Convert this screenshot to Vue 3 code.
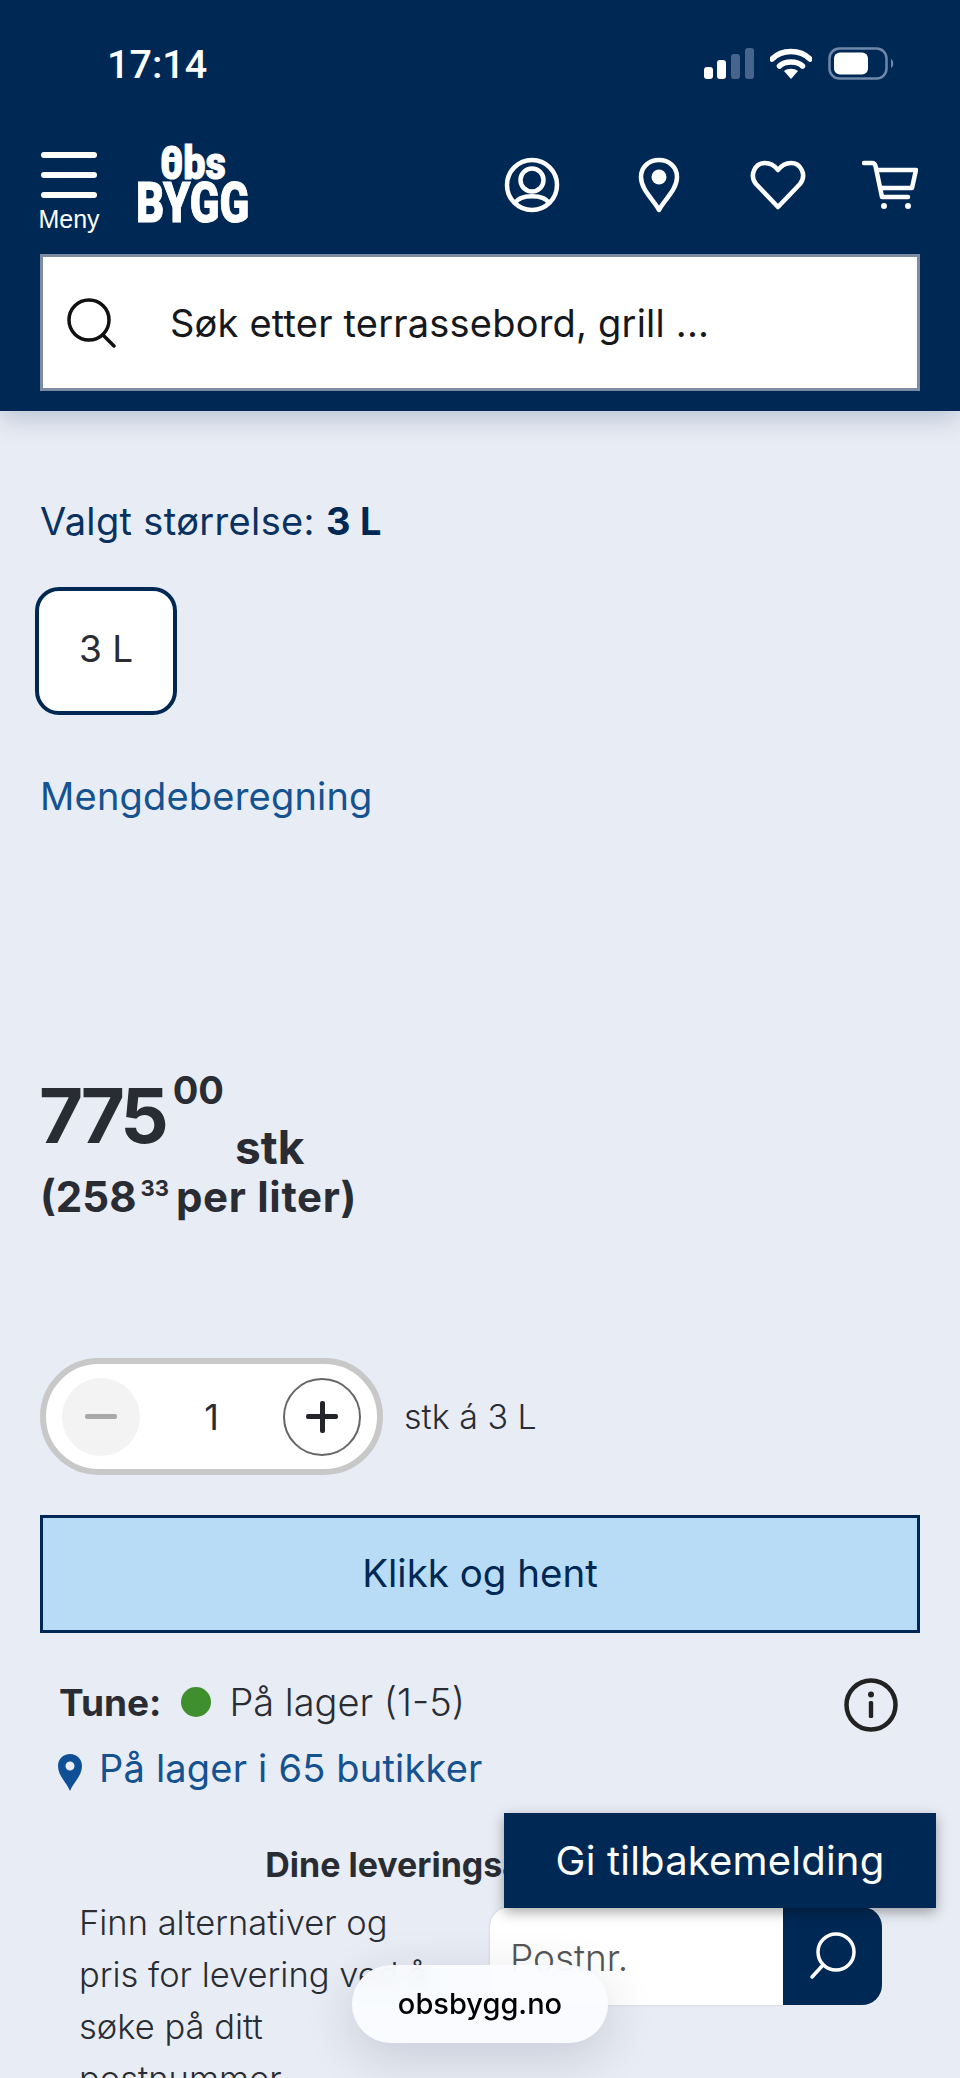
<script setup>
import { ref } from 'vue'

const qty = ref(1)
const lines = ['Finn alternativer og', 'pris for levering ved å', 'søke på ditt', 'postnummer']
</script>

<template>
  <div class="page">
    <header class="top">
      <div class="status">
        <span class="time">17:14</span>
        <div class="status-icons">
          <svg class="signal" width="50" height="31" viewBox="0 0 50 31">
            <rect x="0" y="19" width="9" height="12" rx="3" fill="#fff" />
            <rect x="13" y="12" width="9" height="19" rx="3" fill="#fff" />
            <rect x="27" y="6" width="9" height="25" rx="3" fill="#47658c" />
            <rect x="41" y="0" width="9" height="31" rx="3" fill="#47658c" />
          </svg>
          <svg class="wifi" width="42" height="32" viewBox="0 0 42 32">
            <path d="M2 11 C12 1 30 1 40 11" fill="none" stroke="#fff" stroke-width="5.5" stroke-linecap="round" />
            <path d="M9.5 18 C15 12.500 27 12.500 32.500 18" fill="none" stroke="#fff" stroke-width="5.500" stroke-linecap="round" />
            <path d="M14 23 C18 20 24 20 28 23 L21 31 Z" fill="#fff" />
          </svg>
          <svg class="battery" width="67" height="33" viewBox="0 0 67 33">
            <rect x="1.500" y="1.500" width="57" height="30" rx="10" fill="none" stroke="#6f88a9" stroke-width="2.500" />
            <rect x="6" y="5.500" width="34" height="22" rx="6" fill="#fff" />
            <path d="M63 12 C66 13 66 20 63 21 Z" fill="#6f88a9" />
          </svg>
        </div>
      </div>

      <div class="nav">
        <div class="menu">
          <div class="burger"><i></i><i></i><i></i></div>
          <span class="menu-label">Meny</span>
        </div>
        <div class="logo">
          <span class="logo-obs"><span class="logo-zero">0</span>bs</span>
          <span class="logo-bygg">BYGG</span>
        </div>
        <div class="nav-icons">
          <svg class="ic-user" width="56" height="56" viewBox="0 0 56 56" fill="none" stroke="#fff" stroke-width="4.500">
            <circle cx="28" cy="28" r="25" />
            <circle cx="28" cy="23" r="11.500" />
            <path d="M11 46 C16 37 40 37 45 46" />
          </svg>
          <svg class="ic-pin" width="42" height="56" viewBox="0 0 42 56" fill="none">
            <path d="M21 53 C16 43 3 33 3 20 C3 10 11 3 21 3 C31 3 39 10 39 20 C39 33 26 43 21 53 Z" stroke="#fff" stroke-width="4.500" stroke-linejoin="round" />
            <circle cx="21" cy="20" r="7.500" fill="#fff" />
          </svg>
          <svg class="ic-heart" width="56" height="50" viewBox="0 0 56 50" fill="none">
            <path d="M28 47 L6 24 C-1 15 5 3 15 3 C21 3 25 6 28 10 C31 6 35 3 41 3 C51 3 57 15 50 24 Z" stroke="#fff" stroke-width="4.500" stroke-linejoin="round" />
          </svg>
          <svg class="ic-cart" width="56" height="50" viewBox="0 0 56 50" fill="none" stroke="#fff" stroke-width="4.500" stroke-linecap="round" stroke-linejoin="round">
            <path d="M2 3 H10 C12 3 13 4 13.500 6 L20 37 H46" />
            <path d="M16 10 H54 L50 28 H20" />
            <circle cx="22" cy="46" r="3" fill="#fff" stroke="none" />
            <circle cx="46" cy="46" r="3" fill="#fff" stroke="none" />
          </svg>
        </div>
      </div>

      <div class="search">
        <svg width="50" height="50" viewBox="0 0 50 50" fill="none" stroke="#111" stroke-width="3.500" stroke-linecap="round">
          <circle cx="22" cy="22" r="20" />
          <path d="M36 37 L47 48" />
        </svg>
        <span class="search-text">Søk etter terrassebord, grill ...</span>
      </div>
    </header>

    <main class="content">
      <p class="size-label">Valgt størrelse: <b>3 L</b></p>
      <button class="size-btn">3 L</button>
      <a class="calc-link">Mengdeberegning</a>

      <div class="price">
        <span class="price-main">775</span>
        <span class="price-dec">00</span>
        <span class="price-unit">stk</span>
      </div>
      <div class="price-per">(258<span class="per-dec">33</span><span class="per-text">per liter)</span></div>

      <div class="qty-row">
        <div class="stepper">
          <span class="step minus"><i></i></span>
          <span class="qty">{{ qty }}</span>
          <span class="step plus"><i></i><i class="vert"></i></span>
        </div>
        <span class="qty-unit">stk á 3 L</span>
      </div>

      <button class="cta">Klikk og hent</button>

      <div class="stock">
        <b>Tune:</b>
        <span class="dot"></span>
        <span>På lager (1-5)</span>
        <svg class="info" width="54" height="54" viewBox="0 0 54 54" fill="none">
          <circle cx="27" cy="27" r="24.500" stroke="#222" stroke-width="4.500" />
          <circle cx="27" cy="16.500" r="3" fill="#222" />
          <rect x="24.800" y="23" width="4.400" height="17" rx="1.500" fill="#222" />
        </svg>
      </div>
      <div class="shops">
        <svg width="24" height="37" viewBox="0 0 24 37">
          <path fill-rule="evenodd" fill="#0f4f96" d="M12 37 C9 29 0 22 0 12 C0 5 5 0 12 0 C19 0 24 5 24 12 C24 22 15 29 12 37 Z M12 7.500 A4.500 4.500 0 1 0 12 16.500 A4.500 4.500 0 1 0 12 7.500 Z" />
        </svg>
        <a>På lager i 65 butikker</a>
      </div>

      <h3 class="delivery-title">Dine leveringsalternativer</h3>
      <div class="delivery">
        <p class="delivery-text"><span v-for="l in lines" :key="l">{{ l }}</span></p>
        <div class="postal">
          <span class="postal-input">Postnr.</span>
          <span class="postal-btn">
            <svg width="48" height="48" viewBox="0 0 48 48" fill="none" stroke="#fff" stroke-width="3.500" stroke-linecap="round">
              <circle cx="27" cy="20" r="18" />
              <path d="M14 33 L3 45" />
            </svg>
          </span>
        </div>
      </div>
    </main>

    <button class="feedback">Gi tilbakemelding</button>
    <div class="url-pill">obsbygg.no</div>
  </div>
</template>

<style>
body {
  background: #e8ecf4;
}
</style>

<style scoped>
.page {
  position: relative;
  width: 960px;
  height: 2078px;
  overflow: hidden;
  background: #e8ecf4;
  font-family: Inter, "Noto Sans", sans-serif;
  color: #2a2c33;
}

.top {
  height: 411px;
  background: #002855;
  box-shadow: 0 6px 26px rgba(0, 40, 85, 0.22);
  position: relative;
  z-index: 1;
  color: #fff;
}

.status {
  height: 126px;
  display: flex;
  justify-content: space-between;
  padding: 0 65px 0 107px;
  align-items: flex-start;
}

.time {
  margin-top: 43px;
  font: 500 39.500px/44px Roboto, sans-serif;
}

.status-icons {
  margin-top: 47px;
  display: flex;
  align-items: center;
  gap: 16px;
}

.nav {
  height: 128px;
  display: flex;
  align-items: flex-start;
  position: relative;
  padding-left: 37px;
}

.menu {
  width: 64px;
  display: flex;
  flex-direction: column;
  align-items: center;
}

.burger {
  margin-top: 26px;
  width: 56px;
  display: flex;
  flex-direction: column;
  gap: 14px;
}

.burger i {
  display: block;
  height: 6px;
  border-radius: 3px;
  background: #fff;
}

.menu-label {
  margin-top: 7px;
  font-size: 25px;
  line-height: 28px;
  font-family: "Liberation Sans", sans-serif;
}

.logo {
  margin: 18px 0 0 36px;
  width: 112px;
  display: flex;
  flex-direction: column;
  align-items: center;
  font-family: Roboto, sans-serif;
  font-weight: 900;
  color: #fff;
  -webkit-text-stroke: 1px #fff;
}

.logo-obs {
  font-size: 46px;
  line-height: 38px;
  transform: scaleX(0.86);
}

.logo-zero {
  position: relative;
}

.logo-zero::after {
  content: "";
  position: absolute;
  left: 4px;
  right: 4px;
  top: 21px;
  height: 5px;
  background: #fff;
}

.logo-bygg {
  font-size: 56px;
  line-height: 42px;
  transform: scaleX(0.78);
  white-space: nowrap;
}

.nav-icons {
  position: absolute;
  left: 504px;
  top: 31px;
  display: flex;
  align-items: center;
}

.ic-pin {
  margin-left: 78px;
}

.ic-heart {
  margin-left: 70px;
}

.ic-cart {
  margin-left: 56px;
}

.search {
  height: 137px;
  margin: 0 40px;
  box-sizing: border-box;
  background: #fff;
  border: 3px solid #7d8ba3;
  display: flex;
  align-items: center;
  padding-left: 24px;
  color: #16181d;
}

.search-text {
  margin-left: 53px;
  font-size: 38px;
  letter-spacing: 0.2px;
  font-weight: 400;
}

.content {
  padding: 0 40px;
}

.size-label {
  margin: 85px 0 0;
  font-size: 38px;
  line-height: 50px;
  letter-spacing: 0.35px;
  color: #0a3260;
}

.size-label b {
  color: #002855;
  font-weight: 700;
}

.size-btn {
  display: block;
  margin: 41px 0 0 -5px;
  width: 142px;
  height: 128px;
  padding-bottom: 6px;
  box-sizing: border-box;
  background: #fff;
  border: 4px solid #002855;
  border-radius: 24px;
  font: 400 37px Inter, sans-serif;
  color: #2a2c33;
}

.calc-link {
  display: block;
  margin-top: 56px;
  font-size: 38px;
  line-height: 50px;
  letter-spacing: 0.2px;
  color: #155290;
}

.price {
  margin-top: 249px;
  margin-left: -1px;
  height: 90px;
  display: flex;
  align-items: flex-start;
  font-weight: 700;
}

.price-main {
  font-size: 76px;
  line-height: 90px;
  letter-spacing: -4px;
}

.price-dec {
  margin: -2px 0 0 8px;
  font-size: 38px;
  line-height: 44px;
}

.price-unit {
  margin: 54px 0 0 11px;
  font-size: 46px;
  line-height: 46px;
}

.price-per {
  margin-top: 2px;
  font-size: 42px;
  line-height: 52px;
  font-weight: 700;
}

.per-dec {
  font-size: 22px;
  vertical-align: 16px;
  margin: 0 7px 0 4px;
}

.per-text {
  letter-spacing: 0.7px;
}

.qty-row {
  margin-top: 135px;
  display: flex;
  align-items: center;
  gap: 21px;
}

.stepper {
  width: 343px;
  height: 117px;
  box-sizing: border-box;
  background: #fff;
  border: 6px solid #c8c8c8;
  border-radius: 59px;
  display: flex;
  align-items: center;
  justify-content: space-between;
  padding: 0 16px;
}

.step {
  position: relative;
  width: 78px;
  height: 78px;
  box-sizing: border-box;
  border-radius: 50%;
}

.step i {
  position: absolute;
  left: 50%;
  top: 50%;
  width: 32px;
  height: 5px;
  margin: -2.500px 0 0 -16px;
  border-radius: 2px;
  background: #23252b;
}

.step i.vert {
  width: 5px;
  height: 32px;
  margin: -16px 0 0 -2.500px;
}

.minus {
  background: #f3f3f3;
}

.minus i {
  background: #a9a9a9;
}

.plus {
  border: 2.500px solid #666;
}

.qty {
  font-size: 36px;
}

.qty-unit {
  font-size: 34px;
  font-weight: 300;
}

.cta {
  display: block;
  margin-top: 40px;
  width: 880px;
  height: 118px;
  padding-bottom: 4px;
  box-sizing: border-box;
  background: #b9dcf6;
  border: 3px solid #002855;
  font: 400 38.500px Inter, sans-serif;
  color: #002855;
}

.stock {
  margin: 42px 0 0 19px;
  width: 839px;
  height: 54px;
  display: flex;
  align-items: center;
  font-size: 37px;
  font-weight: 300;
}

.stock b {
  font-weight: 700;
}

.stock span:last-of-type {
  font-size: 38px;
}

.dot {
  width: 30px;
  height: 30px;
  margin: 0 18px 0 20px;
  border-radius: 50%;
  background: #3f8f2f;
}

.info {
  margin-left: auto;
  margin-top: 6px;
}

.shops {
  margin: 15px 0 0 18px;
  display: flex;
  align-items: center;
  gap: 17px;
  font-size: 38px;
  letter-spacing: 0.2px;
  line-height: 46px;
  color: #155290;
}

.shops svg {
  margin-top: 10px;
}

.delivery-title {
  margin: 49px 0 0;
  text-align: center;
  font-size: 34px;
  line-height: 50px;
  font-weight: 700;
  white-space: nowrap;
}

.delivery {
  margin: 7px 0 0 39px;
  display: flex;
  align-items: flex-start;
}

.delivery-text {
  margin: 0;
  width: 411px;
  font-size: 34.500px;
  line-height: 52px;
  font-weight: 300;
}

.delivery-text span {
  display: block;
  white-space: nowrap;
}

.postal {
  margin-top: 10px;
  display: flex;
  height: 98px;
  width: 392px;
}

.postal-input {
  flex: 1;
  background: #fff;
  border-radius: 20px 0 0 20px;
  box-shadow: 0 0 3px rgba(0, 0, 0, 0.15);
  padding-left: 20px;
  font-size: 37px;
  font-weight: 300;
  line-height: 102px;
  color: #555;
}

.postal-btn {
  width: 99px;
  background: #002855;
  border-radius: 0 20px 20px 0;
  display: flex;
  align-items: center;
  justify-content: center;
}

.feedback {
  position: absolute;
  left: 504px;
  top: 1813px;
  z-index: 2;
  width: 432px;
  height: 95px;
  background: #002855;
  border: none;
  box-shadow: 0 4px 12px rgba(0, 0, 0, 0.35);
  color: #fff;
  font: 400 40px Inter, sans-serif;
  letter-spacing: 0.2px;
}

.url-pill {
  position: absolute;
  left: 352px;
  top: 1965px;
  z-index: 3;
  width: 256px;
  height: 78px;
  border-radius: 39px;
  background: rgba(250, 252, 255, 0.92);
  backdrop-filter: blur(8px);
  box-shadow: 0 14px 50px rgba(30, 40, 70, 0.16);
  text-align: center;
  line-height: 78px;
  font-size: 29px;
  font-family: Inter, sans-serif;
  font-weight: 500;
  color: #000;
}
</style>
